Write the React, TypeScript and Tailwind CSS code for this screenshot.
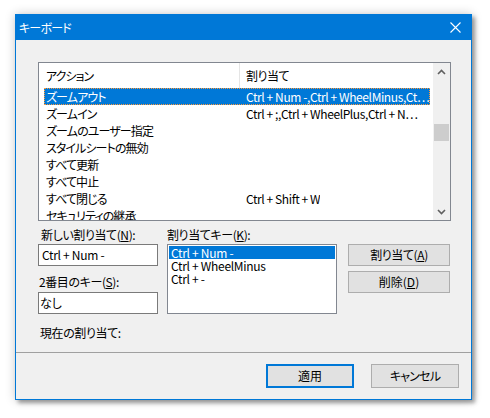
import React from 'react';

const font = { fontFamily: '"Noto Sans CJK JP", "Noto Sans", sans-serif', fontFeatureSettings: '"palt"' };

const rows: [string, string][] = [
  ['ズームアウト', 'Ctrl + Num -,Ctrl + WheelMinus,Ct…'],
  ['ズームイン', 'Ctrl + ;,Ctrl + WheelPlus,Ctrl + N…'],
  ['ズームのユーザー指定', ''],
  ['スタイルシートの無効', ''],
  ['すべて更新', ''],
  ['すべて中止', ''],
  ['すべて閉じる', 'Ctrl + Shift + W'],
  ['セキュリティの継承', ''],
];

const keys = ['Ctrl + Num -', 'Ctrl + WheelMinus', 'Ctrl + -'];

function Label({ text, k, after = '):' }: { text: string; k: string; after?: string }) {
  return (
    <div className="h-[16px] leading-[16px] text-[12px] text-black whitespace-nowrap tracking-[-0.4px]">
      {text}(<span className="underline">{k}</span>{after}
    </div>
  );
}

function ScrollBar() {
  return (
    <div className="w-[17px] h-full shrink-0 bg-[#f0f0f0] flex flex-col">
      <div className="h-[17px] flex items-center justify-center">
        <svg width="9" height="6" viewBox="0 0 9 6">
          <path d="M1 5 L4.5 1.5 L8 5" stroke="#606060" strokeWidth="1.6" fill="none" />
        </svg>
      </div>
      <div className="h-[44px]" />
      <div className="h-[17px] mx-[1px] bg-[#cdcdcd]" />
      <div className="flex-1" />
      <div className="h-[17px] flex items-center justify-center">
        <svg width="9" height="6" viewBox="0 0 9 6">
          <path d="M1 1 L4.5 4.5 L8 1" stroke="#606060" strokeWidth="1.6" fill="none" />
        </svg>
      </div>
    </div>
  );
}

export default function App() {
  return (
    <div className="w-[490px] h-[418px] bg-white pt-[14px] pl-[15px]" style={font}>
      <div className="w-[457px] h-[386px] border border-[#0078d7] bg-[#f0f0f0] flex flex-col shadow-[0_0_10px_rgba(0,0,0,0.2),3px_3px_4px_rgba(0,0,0,0.35)]">
        {/* title bar */}
        <div className="h-[25px] bg-[#0078d7] flex items-center justify-between pl-[3px] pr-[10px]">
          <span className="text-white text-[12px] leading-[16px] tracking-[-0.8px]">キーボード</span>
          <svg width="11" height="11" viewBox="0 0 11 11">
            <path d="M0.5 0.5 L10.5 10.5 M10.5 0.5 L0.5 10.5" stroke="white" strokeWidth="1.1" />
          </svg>
        </div>

        {/* body */}
        <div className="h-[312px] pt-[22px] pl-[22px] flex flex-col">
          <div className="w-[413px] h-[159px] border border-[#828790] bg-white flex overflow-hidden">
            <div className="w-[394px] flex flex-col overflow-hidden">
              <div className="h-[25px] flex text-[12px] text-black shrink-0">
                <div className="w-[201px] shrink-0 pl-[7px] flex items-center border-r border-[#e5e5e5] tracking-[-1px]">アクション</div>
                <div className="pl-[6px] flex items-center tracking-[-0.5px]">割り当て</div>
              </div>
              {rows.map(([a, b], i) => (
                <div
                  key={a}
                  className={
                    i === 0
                      ? 'ml-[5px] mr-[3px] h-[17px] shrink-0 flex text-[12px] leading-[15px] bg-[#0078d7] text-white border border-dotted border-[#ff9a3a] overflow-hidden'
                      : 'ml-[5px] mr-[3px] h-[17px] shrink-0 flex text-[12px] leading-[17px] text-black overflow-hidden'
                  }
                >
                  <div className={i === 0 ? 'w-[195px] shrink-0 pl-[1px] whitespace-nowrap tracking-[-0.9px]' : 'w-[196px] shrink-0 pl-[2px] whitespace-nowrap tracking-[-0.9px]'}>{a}</div>
                  <div className="pl-[6px] whitespace-nowrap overflow-hidden tracking-[-0.4px]">{b}</div>
                </div>
              ))}
            </div>
            <ScrollBar />
          </div>

          <div className="flex mt-[6px]">
            <div className="w-[120px] flex flex-col">
              <div className="pl-[3px]"><Label text="新しい割り当て" k="N" /></div>
              <div className="mt-[1px] h-[22px] border border-[#7a7a7a] bg-white text-[12px] leading-[20px] pl-[3px] text-black tracking-[-0.3px]">Ctrl + Num -</div>
              <div className="mt-[8px] pl-[1px]"><Label text="2番目のキー" k="S" /></div>
              <div className="mt-[2px] h-[22px] border border-[#7a7a7a] bg-white text-[12px] leading-[20px] pl-[1px] text-black">なし</div>
              <div className="mt-[11px] pl-[2px] h-[16px] leading-[16px] text-[12px] text-black tracking-[-0.4px]">現在の割り当て:</div>
            </div>

            <div className="w-[170px] ml-[9px] flex flex-col">
              <Label text="割り当てキー" k="K" />
              <div className="mt-[1px] h-[70px] border border-[#828790] bg-white p-[1px]">
                {keys.map((k, i) => (
                  <div
                    key={k}
                    className={
                      i === 0
                        ? 'h-[13px] leading-[13px] text-[12px] pl-[2px] bg-[#0078d7] text-white tracking-[-0.3px]'
                        : 'h-[13px] leading-[13px] text-[12px] pl-[2px] text-black tracking-[-0.3px]'
                    }
                  >
                    {k}
                  </div>
                ))}
              </div>
            </div>

            <div className="w-[102px] ml-[11px] flex flex-col pt-[17px] gap-[5px]">
              <button className="h-[22px] bg-[#e1e1e1] border border-[#adadad] text-[12px] text-black leading-[20px] tracking-[-0.4px]">
                割り当て(<span className="underline">A</span>)
              </button>
              <button className="h-[22px] bg-[#e1e1e1] border border-[#adadad] text-[12px] text-black leading-[20px]">
                削除(<span className="underline">D</span>)
              </button>
            </div>
          </div>
        </div>

        {/* footer */}
        <div className="flex-1 border-t border-[#a0a0a0] flex justify-end items-start pt-[11px] pr-[12px] gap-[17px]">
          <button className="w-[88px] h-[24px] bg-[#e1e1e1] border-2 border-[#0078d7] text-[12px] text-black leading-[20px]">適用</button>
          <button className="w-[88px] h-[24px] bg-[#e1e1e1] border border-[#adadad] text-[12px] text-black leading-[22px] tracking-[-0.8px]">キャンセル</button>
        </div>
      </div>
    </div>
  );
}
